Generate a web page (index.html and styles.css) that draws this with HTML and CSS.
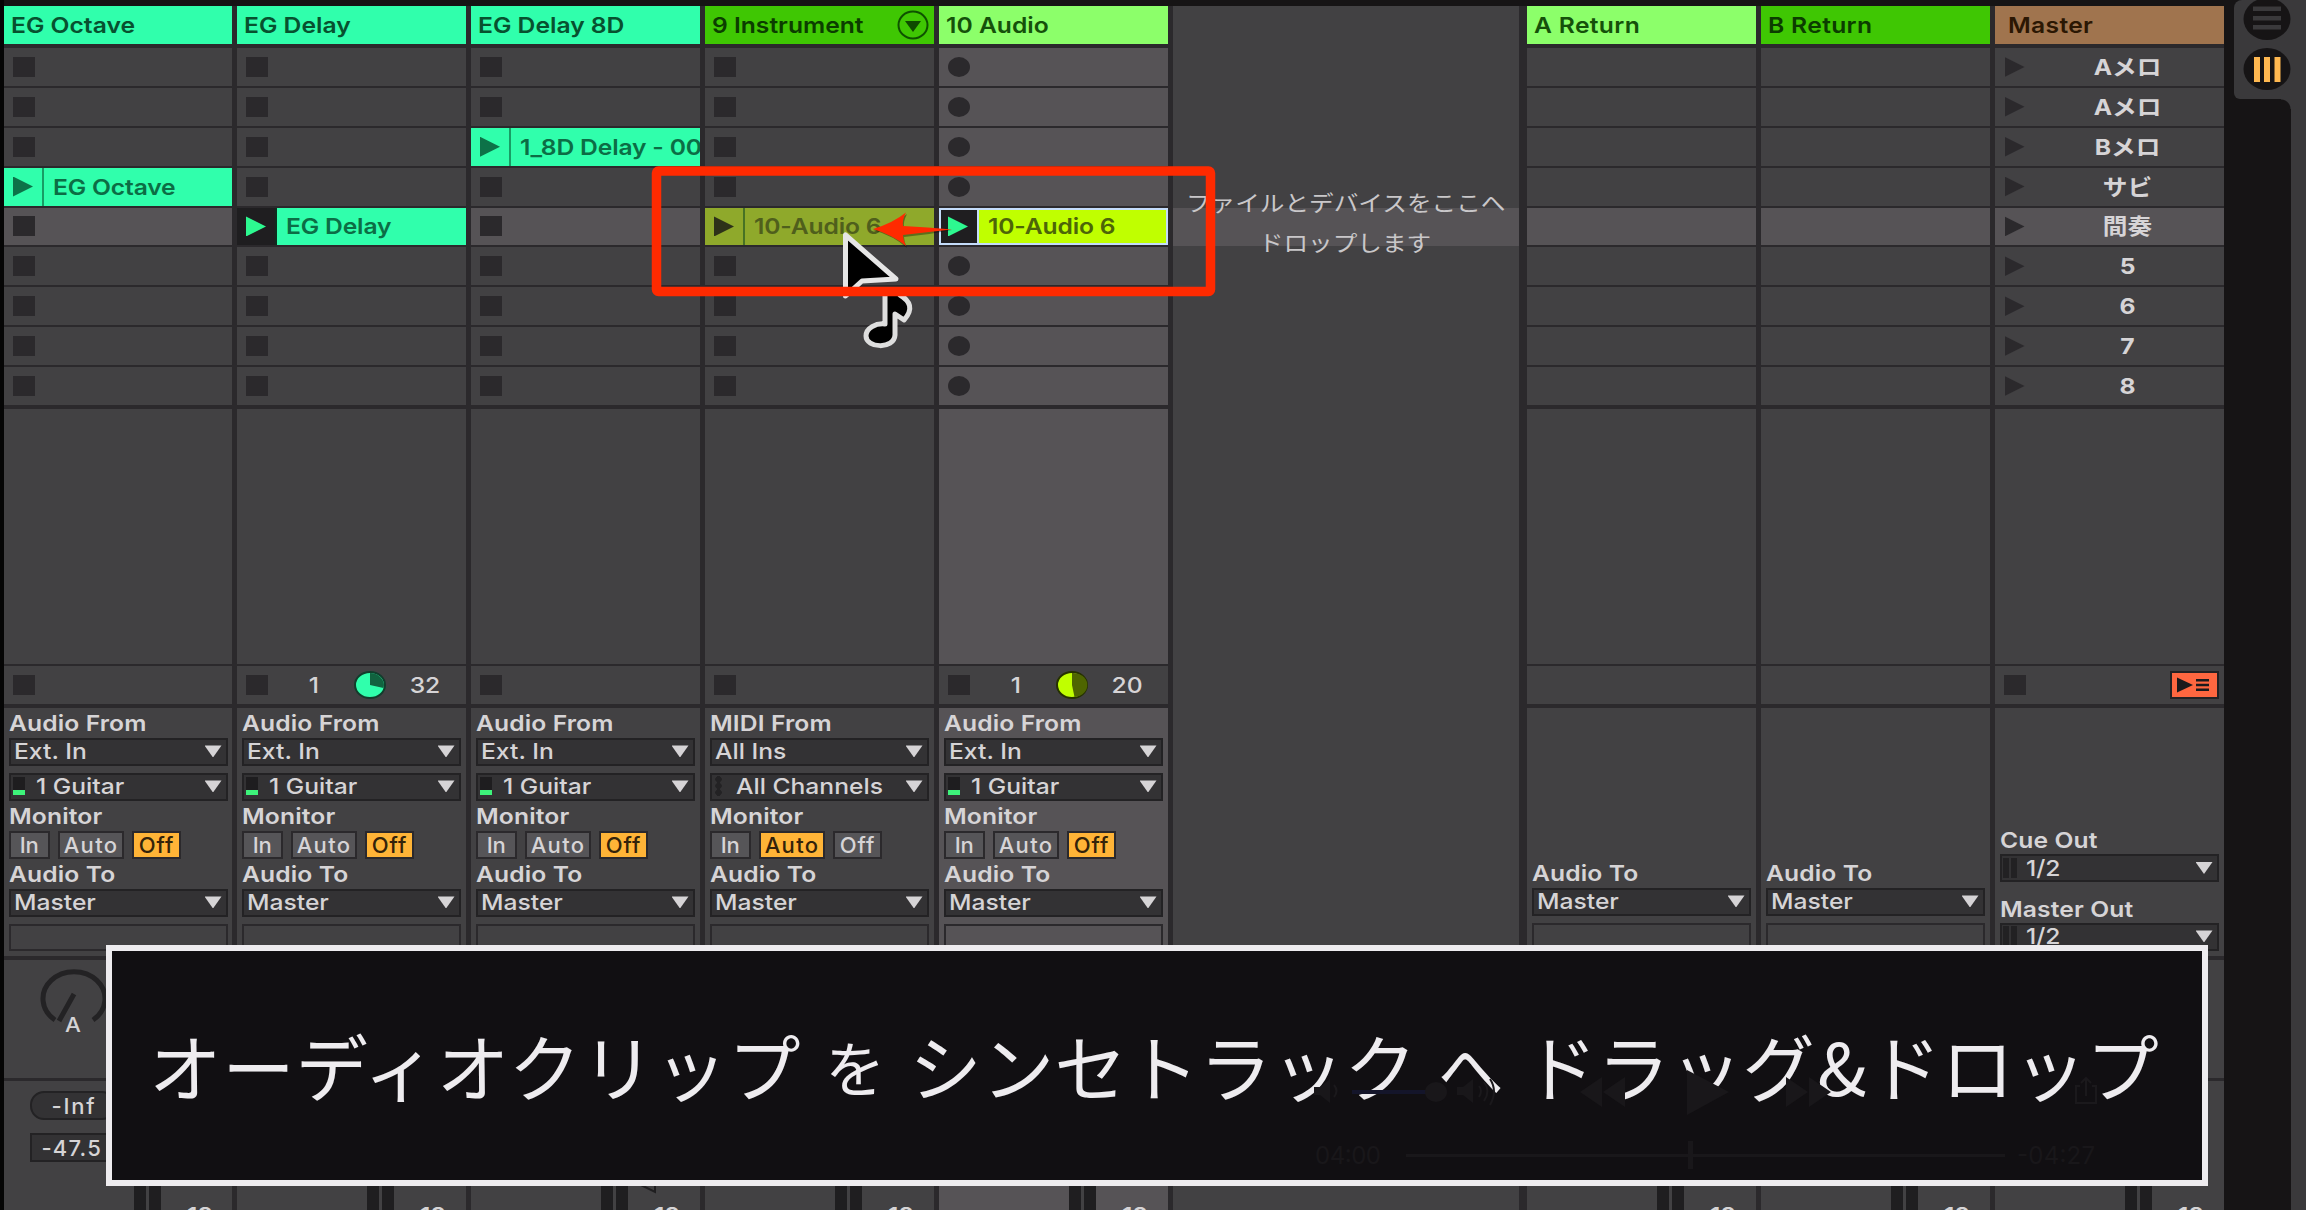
FILE: index.html
```html
<!doctype html>
<html lang="ja">
<head>
	<meta charset="utf-8">
	<title>Session View</title>
	<link rel="stylesheet" href="styles.css">
</head>
<body>

	<div class="session">
		<div class="track">
			<h2 class="track-name mint"><span>EG Octave</span></h2>
			<ul class="slots stops">
				<li></li>
				<li></li>
				<li></li>
				<li class="clip mint"><b class="launch"></b><span>EG Octave</span></li>
				<li></li>
				<li></li>
				<li></li>
				<li></li>
				<li></li>
			</ul>
			<div class="space"></div>
			<div class="status"><i class="stop"></i></div>
			<div class="io">
				<h3><span>Audio From</span></h3>
				<div class="select"><span>Ext. In</span></div>
				<div class="select"><i class="meter"></i><span>1 Guitar</span></div>
				<h3><span>Monitor</span></h3>
				<div class="monitor"><b>In</b><b>Auto</b><b class="on">Off</b></div>
				<h3><span>Audio To</span></h3>
				<div class="select"><span>Master</span></div>
				<div class="box"></div>
			</div>
			<div class="sends">
				<svg class="knob" width="70" height="64" viewBox="0 0 70 64">
					<path d="M16 54A31 27 0 1 1 54 54M35 28L20 55"/>
				</svg>
				<span class="knob-label">A</span>
			</div>
			<div class="mixer">
				<div class="levels">
					<span class="pill">-Inf</span>
					<span class="volume">-47.5</span>
				</div>
				<div class="bars"></div>
				<span class="scale">12</span>
			</div>
		</div>

		<div class="track">
			<h2 class="track-name mint"><span>EG Delay</span></h2>
			<ul class="slots stops">
				<li></li>
				<li></li>
				<li></li>
				<li></li>
				<li class="clip mint playing"><b class="launch"></b><span>EG Delay</span></li>
				<li></li>
				<li></li>
				<li></li>
				<li></li>
			</ul>
			<div class="space"></div>
			<div class="status">
				<i class="stop"></i>
				<span class="count">1</span>
				<svg class="pie" width="34" height="30" viewBox="0 0 34 30">
					<ellipse cx="17" cy="15" rx="15" ry="13" fill="#30ffac" stroke="#123d2c" stroke-width="2"/>
					<path d="M17 15V3A14 12 0 0 1 30.500 18Z" fill="#12623f"/>
				</svg>
				<span class="count">32</span>
			</div>
			<div class="io">
				<h3><span>Audio From</span></h3>
				<div class="select"><span>Ext. In</span></div>
				<div class="select"><i class="meter"></i><span>1 Guitar</span></div>
				<h3><span>Monitor</span></h3>
				<div class="monitor"><b>In</b><b>Auto</b><b class="on">Off</b></div>
				<h3><span>Audio To</span></h3>
				<div class="select"><span>Master</span></div>
				<div class="box"></div>
			</div>
			<div class="sends"></div>
			<div class="mixer"><div class="bars"></div><span class="scale">12</span></div>
		</div>

		<div class="track">
			<h2 class="track-name mint"><span>EG Delay 8D</span></h2>
			<ul class="slots stops">
				<li></li>
				<li></li>
				<li class="clip mint"><b class="launch"></b><span>1_8D Delay - 00</span></li>
				<li></li>
				<li></li>
				<li></li>
				<li></li>
				<li></li>
				<li></li>
			</ul>
			<div class="space"></div>
			<div class="status"><i class="stop"></i></div>
			<div class="io">
				<h3><span>Audio From</span></h3>
				<div class="select"><span>Ext. In</span></div>
				<div class="select"><i class="meter"></i><span>1 Guitar</span></div>
				<h3><span>Monitor</span></h3>
				<div class="monitor"><b>In</b><b>Auto</b><b class="on">Off</b></div>
				<h3><span>Audio To</span></h3>
				<div class="select"><span>Master</span></div>
				<div class="box"></div>
			</div>
			<div class="sends"></div>
			<div class="mixer">
				<svg class="fader" width="18" height="12" viewBox="0 0 18 12"><path d="M1 1L15 8V1" fill="none" stroke="#1f1e20" stroke-width="2"/></svg>
				<div class="bars"></div>
				<span class="scale">12</span>
			</div>
		</div>

		<div class="track">
			<h2 class="track-name green">
				<span>9 Instrument</span>
				<svg class="fold" width="32" height="30" viewBox="0 0 32 30">
					<ellipse cx="16" cy="15" rx="14.500" ry="13.500" fill="none" stroke="#0e5200" stroke-width="2"/>
					<path d="M8 11H24L16 22Z" fill="#0e4a00"/>
				</svg>
			</h2>
			<ul class="slots stops">
				<li></li>
				<li></li>
				<li></li>
				<li></li>
				<li class="clip ghost"><b class="launch"></b><span>10-Audio 6</span></li>
				<li></li>
				<li></li>
				<li></li>
				<li></li>
			</ul>
			<div class="space"></div>
			<div class="status"><i class="stop"></i></div>
			<div class="io">
				<h3><span>MIDI From</span></h3>
				<div class="select"><span>All Ins</span></div>
				<div class="select"><i class="midi"></i><span>All Channels</span></div>
				<h3><span>Monitor</span></h3>
				<div class="monitor"><b>In</b><b class="on">Auto</b><b>Off</b></div>
				<h3><span>Audio To</span></h3>
				<div class="select"><span>Master</span></div>
				<div class="box"></div>
			</div>
			<div class="sends"></div>
			<div class="mixer"><div class="bars"></div><span class="scale">12</span></div>
		</div>

		<div class="track selected">
			<h2 class="track-name lime"><span>10 Audio</span></h2>
			<ul class="slots records">
				<li></li>
				<li></li>
				<li></li>
				<li></li>
				<li class="clip yellow playing"><b class="launch"></b><span>10-Audio 6</span></li>
				<li></li>
				<li></li>
				<li></li>
				<li></li>
			</ul>
			<div class="space"></div>
			<div class="status">
				<i class="stop"></i>
				<span class="count">1</span>
				<svg class="pie" width="34" height="30" viewBox="0 0 34 30">
					<ellipse cx="17" cy="15" rx="15" ry="13" fill="#c0ff00" stroke="#263100" stroke-width="2"/>
					<path d="M17 15V3A14 12 0 0 1 19.500 27Z" fill="#4e6500"/>
				</svg>
				<span class="count">20</span>
			</div>
			<div class="io">
				<h3><span>Audio From</span></h3>
				<div class="select"><span>Ext. In</span></div>
				<div class="select"><i class="meter"></i><span>1 Guitar</span></div>
				<h3><span>Monitor</span></h3>
				<div class="monitor"><b>In</b><b>Auto</b><b class="on">Off</b></div>
				<h3><span>Audio To</span></h3>
				<div class="select"><span>Master</span></div>
				<div class="box"></div>
			</div>
			<div class="sends"></div>
			<div class="mixer"><div class="bars"></div><span class="scale">12</span></div>
		</div>

		<div class="drop-area">
			<p><span>ファイルとデバイスをここへ</span></p>
			<p><span>ドロップします</span></p>
		</div>

		<div class="track">
			<h2 class="track-name lime return"><span>A Return</span></h2>
			<ul class="slots">
				<li></li><li></li><li></li><li></li><li></li><li></li><li></li><li></li><li></li>
			</ul>
			<div class="space"></div>
			<div class="status"></div>
			<div class="io">
				<h3><span>Audio To</span></h3>
				<div class="select"><span>Master</span></div>
				<div class="box"></div>
			</div>
			<div class="sends"></div>
			<div class="mixer"><div class="bars"></div><span class="scale">12</span></div>
		</div>

		<div class="track">
			<h2 class="track-name green return"><span>B Return</span></h2>
			<ul class="slots">
				<li></li><li></li><li></li><li></li><li></li><li></li><li></li><li></li><li></li>
			</ul>
			<div class="space"></div>
			<div class="status"></div>
			<div class="io">
				<h3><span>Audio To</span></h3>
				<div class="select"><span>Master</span></div>
				<div class="box"></div>
			</div>
			<div class="sends"></div>
			<div class="mixer"><div class="bars"></div><span class="scale">12</span></div>
		</div>

		<div class="track master">
			<h2 class="track-name brown return"><span>Master</span></h2>
			<ul class="slots scenes">
				<li><span>Aメロ</span></li>
				<li><span>Aメロ</span></li>
				<li><span>Bメロ</span></li>
				<li><span>サビ</span></li>
				<li><span>間奏</span></li>
				<li><span>5</span></li>
				<li><span>6</span></li>
				<li><span>7</span></li>
				<li><span>8</span></li>
			</ul>
			<div class="space"></div>
			<div class="status">
				<i class="stop"></i>
				<svg class="back" width="49" height="28" viewBox="0 0 49 28">
					<rect x="1" y="1" width="47" height="26" fill="#ff6740" stroke="#242224" stroke-width="2"/>
					<path d="M7 6.500L23 14L7 21.500ZM26 8H39V10.500H26ZM26 12.700H39V15.200H26ZM26 17.500H39V20H26Z" fill="#1c1a1c"/>
				</svg>
			</div>
			<div class="io">
				<h3><span>Cue Out</span></h3>
				<div class="select"><i class="stereo"></i><span>1/2</span></div>
				<h3><span>Master Out</span></h3>
				<div class="select"><i class="stereo"></i><span>1/2</span></div>
			</div>
			<div class="sends"></div>
			<div class="mixer"><div class="bars"></div><span class="scale">12</span></div>
		</div>

		<div class="rail">
			<div class="rail-tab">
				<svg width="48" height="42" viewBox="0 0 48 42">
					<ellipse cx="24" cy="21" rx="23.500" ry="21" fill="#161415"/>
					<path d="M10 8.500H38V13H10ZM10 18H38V22.500H10ZM10 27H38V31.500H10Z" fill="#3a393b"/>
				</svg>
				<svg width="48" height="42" viewBox="0 0 48 42">
					<ellipse cx="24" cy="21" rx="23.500" ry="21" fill="#161415"/>
					<path d="M11 9H17V34H11ZM21 9H27V34H21ZM31.500 9H37.500V34H31.500Z" fill="#ffb850"/>
				</svg>
			</div>
			<div class="rail-body"></div>
		</div>
	</div>

	<!-- dragged clip: cursor with note, arrow and frame -->
	<svg class="drag" width="570" height="200" viewBox="650 160 570 200">
		<path d="M845.500 235V296L862 281L896 279Z" fill="#000" stroke="#e6e6e6" stroke-width="5" stroke-linejoin="round"/>
		<path d="M885 290V324C876 323 866 328 866 336C866 348 894 350 895 335V314L904 320C914 309 910 301 900 295L895 290Z" fill="#000" stroke="#dedede" stroke-width="5" stroke-linejoin="round"/>
		<path d="M873 230Q894 224 907 214Q903 222 904 227Q928 228 952 230Q928 235 904 237Q904 242 907 248Q894 236 873 230Z" fill="#000" opacity=".35"/>
		<path d="M873 229Q893 223 906 212.500Q902 220 903 226Q928 227 952 229.500Q928 232 903 235Q903 240 906 246Q893 235 873 229Z" fill="#ff2a00"/>
		<rect x="656.500" y="171" width="554" height="120.500" rx="2" fill="none" stroke="#ff2a00" stroke-width="9.500" stroke-linejoin="round"/>
	</svg>

	<div class="caption">
		<svg class="player" width="860" height="180" viewBox="1300 1000 860 180">
			<path d="M1314 1087H1320L1330 1079V1103L1320 1095H1314ZM1457 1087H1463L1473 1079V1103L1463 1095H1457ZM1580 1092L1602 1077V1107ZM1603 1092L1625 1077V1107ZM1687 1070L1729 1092L1687 1115ZM1786 1077L1808 1092L1786 1107ZM1809 1077L1831 1092L1809 1107Z"/>
			<path d="M1352 1090H1430V1094H1352Z" fill="#14152a"/>
			<path d="M1334 1085Q1339 1091 1334 1097M1479 1086Q1483 1091 1479 1097M1484 1082Q1491 1091 1484 1101M1490 1079Q1498 1091 1490 1105" fill="none" stroke="#1b191c" stroke-width="2"/>
			<ellipse cx="1436" cy="1092" rx="11" ry="10"/>
			<path d="M1406 1154H2005V1157H1406ZM1688 1141H1693V1169H1688Z"/>
			<path d="M2080 1086H2076V1103H2096V1086H2092M2086 1096V1078M2081 1083L2086 1078L2091 1083" fill="none" stroke="#1b191c" stroke-width="2"/>
			<text x="1315" y="1164" textLength="66">04:00</text>
			<text x="2017" y="1164" textLength="78">-04:27</text>
		</svg>
		<span class="word first">オーディオクリップ</span>
		<span class="particle">を</span>
		<span class="word">シンセトラック</span>
		<span class="particle he">へ</span>
		<span class="word">ドラッグ</span>
		<span class="amp">&amp;</span>
		<span class="word">ドロップ</span>
	</div>

</body>
</html>
```
FILE: styles.css
```css
* {
	box-sizing: border-box;
}

body {
	margin: 0;
	width: 2306px;
	height: 1210px;
	overflow: hidden;
	position: relative;
	background: #161415;
	color: #d6d4d6;
	font: 500 22px/1 Inter, "Noto Sans CJK JP", sans-serif;
}

h2, h3, p, ul {
	margin: 0;
	padding: 0;
	font-size: inherit;
	font-weight: 600;
	list-style: none;
}

/* Tracks sit side by side on the dark grid colour */
.session {
	display: flex;
	gap: 5px;
	height: 1210px;
	padding-left: 2.500px;
	background: linear-gradient(#161415 6px, #2b292c 6px);
}

.track {
	display: flex;
	flex-direction: column;
	flex: none;
	width: 229px;
	padding-top: 6px;
	white-space: nowrap;
}

/* the interface lettering is wide */
.track span,
.drop-area span {
	display: inline-block;
	transform: scaleX(1.12);
	transform-origin: left;
}

.track:first-child {
	border-left: 1px solid #050505;
	box-shadow: -3px 0 #050505;
}

.track-name {
	display: flex;
	align-items: center;
	justify-content: space-between;
	height: 38px;
	margin-bottom: 4px;
	padding: 0 5px 0 7.500px;
}

.mint { background: #30ffac; color: #07512f; }
.green { background: #3fc703; color: #0b3d00; }
.lime { background: #8cff6a; color: #15510a; }
.brown { background: #a0744e; color: #2b1703; }

.return {
	letter-spacing: .300px;
}

.master .track-name {
	padding-left: 13px;
}

/* Clip slots */
.slots {
	margin-bottom: 2px;
}

.slots li {
	display: flex;
	align-items: center;
	height: 37.875px;
	margin-bottom: 2px;
	background: #424143;
	overflow: hidden;
}

.slots li:nth-child(5),
.selected .slots li {
	background: #565356;
}

.stops li::before,
.records li::before,
.stop {
	content: "";
	flex: none;
	width: 22px;
	height: 20px;
	margin-left: 9.500px;
	background: #2b292c;
}

.records li::before {
	border-radius: 50%;
}

.scenes li::before {
	content: "";
	width: 20px;
	height: 20px;
	margin-left: 10px;
	background: #2b292c;
	clip-path: polygon(0 0, 100% 50%, 0 100%);
}

.scenes li span {
	width: 193px;
	margin-left: 6px;
	font-weight: 700;
	text-align: center;
	transform-origin: center;
}

.slots li.clip::before {
	display: none;
}

.slots .clip.mint { background: #30ffac; color: #0c6d45; }
.slots .clip.yellow { background: #c0ff00; color: #4d6508; }
.slots .clip.ghost { background: #8fa92b; color: #4f5f1c; }

.clip span {
	letter-spacing: -.150px;
}

.clip .launch {
	display: flex;
	align-items: center;
	flex: none;
	width: 40px;
	height: 100%;
	margin-right: 9px;
	padding-left: 9.500px;
	border-right: 2px solid rgba(0, 60, 30, .5);
}

.clip .launch::before {
	content: "";
	width: 20px;
	height: 20px;
	background: #0d7248;
	clip-path: polygon(0 0, 100% 50%, 0 100%);
}

.clip.playing .launch {
	background: #1f1e20;
}

.clip.playing .launch::before {
	background: #2df990;
}

.clip.ghost .launch::before {
	background: #2d3119;
}

.clip.yellow {
	border: 2px solid #c4dcfa;
}

.clip.yellow .launch {
	margin-left: -2px;
	border-right-color: #c4dcfa;
}

.space {
	height: 255px;
	margin-bottom: 2px;
	background: #424143;
}

/* Clip stop and loop progress */
.status {
	display: flex;
	align-items: center;
	height: 38px;
	margin-bottom: 4px;
	background: #424143;
}

.count {
	width: 28px;
	margin-left: 32px;
	text-align: center;
	transform-origin: center !important;
}

.pie {
	margin-left: 25px;
}

.pie + .count {
	margin-left: 24px;
}

.back {
	margin-left: auto;
	margin-right: 5px;
}

/* In / out routing */
.io {
	display: flex;
	flex-direction: column;
	justify-content: flex-end;
	height: 248px;
	margin-bottom: 4px;
	padding: 0 5px 5px;
	background: #424143;
}

.selected .space,
.selected .io,
.selected .mixer,
.selected .sends {
	background: #565356;
}

.io h3 {
	height: 30px;
	line-height: 30px;
}

.io h3 span {
	letter-spacing: .100px;
}

.select {
	display: flex;
	align-items: center;
	flex: none;
	width: 219px;
	height: 28px;
	padding: 0 4px 1px 3.500px;
	border: 2px solid #232224;
	background: #333234;
}

.select + .select,
.select + .box {
	margin-top: 7px;
}

.select::after {
	content: "";
	width: 17px;
	height: 12px;
	margin-left: auto;
	background: #d6d4d6;
	clip-path: polygon(0 0, 100% 0, 50% 100%);
}

.box {
	width: 219px;
	height: 28px;
	border: 2px solid #2b292c;
}

.master .select + h3 {
	margin-top: 10.500px;
}

.master .io h3 {
	line-height: 32px;
}

.meter {
	width: 12px;
	height: 18px;
	margin-left: -1px;
	margin-right: 11px;
	background: linear-gradient(#1e1d1f 13px, #3df37a 13px);
}

.midi {
	width: 7px;
	height: 20px;
	margin-right: 14px;
	background: radial-gradient(circle, #232224 3px, transparent 3.500px) 0 0 / 7px 6.600px;
}

.stereo {
	width: 14px;
	height: 20px;
	margin-left: -2px;
	margin-right: 9px;
	background: linear-gradient(90deg, #222123 6px, transparent 6px 8px, #222123 8px);
}

.monitor {
	display: flex;
	gap: 8px;
	height: 28px;
}

.monitor b {
	width: 41.500px;
	border: 2px solid #2b292c;
	background: #565558;
	font-weight: 500;
	line-height: 24px;
	text-align: center;
}

.monitor b:nth-child(2) { width: 66px; letter-spacing: 1.300px; }
.monitor b:nth-child(3) { width: 49px; letter-spacing: 1px; }

.monitor b.on {
	background: #ffb437;
	color: #33230a;
}

/* Sends and mixer strip */
.sends {
	height: 118px;
	margin-bottom: 3px;
	background: #424143;
}

.knob {
	display: block;
	margin: 0 0 -15px 35px;
	padding-top: 6px;
	height: 70px;
	fill: none;
	stroke: #232224;
	stroke-width: 5;
}

.track .knob-label {
	display: block;
	width: 20px;
	margin-left: 61px;
	font-size: 20px;
}

.mixer {
	display: flex;
	position: relative;
	height: 129px;
	background: #424143;
}

.bars {
	width: 27px;
	margin-left: 130.500px;
	background: linear-gradient(90deg, #1f1e20 12px, #424143 12px 15px, #1f1e20 15px);
}

.levels {
	display: flex;
	flex-direction: column;
	gap: 13px;
	width: 90px;
	margin-right: -90px;
	padding: 10px 0 0 26px;
}

.track .pill,
.track .volume {
	width: 86px;
	height: 29px;
	padding-left: 20px;
	border: 2px solid #232224;
	border-radius: 14px;
	background: #333234;
	line-height: 26px;
	letter-spacing: 1.800px;
	transform: none;
}

.track .volume {
	padding-left: 10px;
	border-radius: 0;
	letter-spacing: 1.200px;
}

.fader {
	margin: 103px -187px 0 169px;
}

.scale {
	margin: 123px 0 0 26px;
	font-weight: 600;
}

.drop-area {
	flex: none;
	width: 346px;
	margin: 6px 3px 0 0;
	padding-top: 177px;
	background: linear-gradient(#424143 202px, #565356 202px 240px, #424143 240px);
	color: #c9c7c9;
	text-align: center;
}

.drop-area p {
	height: 40px;
	font-weight: 400;
	line-height: 40px;
}

.drop-area span {
	transform-origin: center;
}

/* View switches on the right edge */
.rail {
	display: flex;
	flex-direction: column;
	flex: 1;
	margin-left: -5px;
	padding-left: 10px;
	background: #161415;
}

.rail-tab {
	display: flex;
	flex-direction: column;
	align-items: center;
	gap: 8px;
	height: 99px;
	padding-right: 6px;
	border-radius: 8px 0 0 6px;
	background: #3a393b;
}

.rail-tab svg {
	flex: none;
}

.rail-tab svg:first-child {
	margin-top: -2px;
}

.rail-body {
	flex: 1;
	margin-left: -10px;
	border-right: 15px solid #3a393b;
	background: radial-gradient(circle at 0 100%, #161415 9px, #3a393b 10px) right top / 10px 10px no-repeat;
}

.drag {
	position: absolute;
	left: 650px;
	top: 160px;
}

/* Caption over the mixer */
.caption {
	display: flex;
	align-items: center;
	position: absolute;
	left: 106px;
	top: 945px;
	width: 2102px;
	height: 241px;
	padding-left: 37px;
	border: 6px solid #eeecef;
	background: #110f12;
	color: #eeecef;
	font: 400 72.500px/1 "Noto Sans CJK JP", sans-serif;
	white-space: nowrap;
}

.first {
	letter-spacing: .700px;
}

.word + .particle {
	width: 108px;
	font-size: 60px;
	text-align: center;
}

.word + .he {
	width: 108px;
	font-size: 66px;
}

.amp {
	width: 54px;
	text-align: center;
}

.player {
	position: absolute;
	left: 1188px;
	top: 49px;
	fill: #19171a;
	font: 400 24px Inter, sans-serif;
}
```
